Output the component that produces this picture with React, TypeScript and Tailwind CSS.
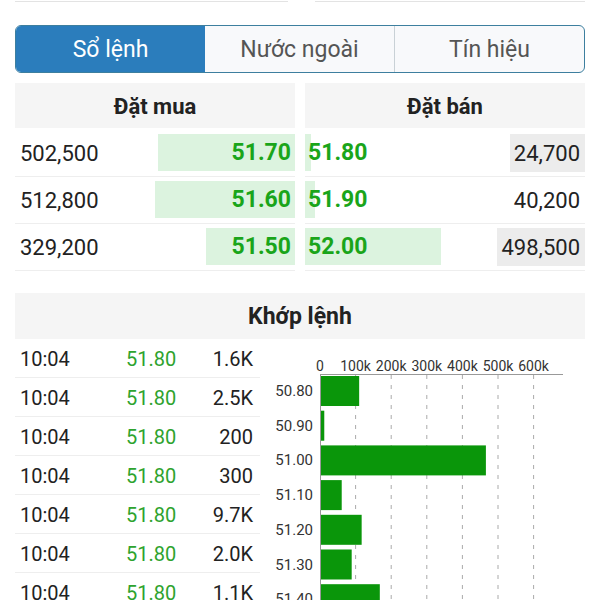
import React from 'react';

const buyRows = [
  { qty: '502,500', price: '51.70', bar: 137 },
  { qty: '512,800', price: '51.60', bar: 140 },
  { qty: '329,200', price: '51.50', bar: 89 },
];

const sellRows = [
  { price: '51.80', qty: '24,700', bar: 6, boxed: true },
  { price: '51.90', qty: '40,200', bar: 10, boxed: false },
  { price: '52.00', qty: '498,500', bar: 136, boxed: true },
];

const trades = [
  { time: '10:04', price: '51.80', vol: '1.6K' },
  { time: '10:04', price: '51.80', vol: '2.5K' },
  { time: '10:04', price: '51.80', vol: '200' },
  { time: '10:04', price: '51.80', vol: '300' },
  { time: '10:04', price: '51.80', vol: '9.7K' },
  { time: '10:04', price: '51.80', vol: '2.0K' },
  { time: '10:04', price: '51.80', vol: '1.1K' },
];

const volumeBars = [
  { label: '50.80', value: 110 },
  { label: '50.90', value: 12 },
  { label: '51.00', value: 466 },
  { label: '51.10', value: 61 },
  { label: '51.20', value: 117 },
  { label: '51.30', value: 89 },
  { label: '51.40', value: 168 },
];

const ticks = ['0', '100k', '200k', '300k', '400k', '500k', '600k'];

function VolumeChart() {
  const x0 = 60;
  const step = 35.6;
  return (
    <svg width="325" height="270" className="block">
      {ticks.map((t, i) => (
        <text
          key={t}
          x={x0 + i * step}
          y={32}
          textAnchor="middle"
          fontSize="14"
          fill="#333"
          fontFamily="Roboto, sans-serif"
        >
          {t}
        </text>
      ))}
      <line x1={x0} y1={35.5} x2={303} y2={35.5} stroke="#999" strokeWidth="1" />
      {ticks.slice(1).map((t, i) => (
        <line
          key={t}
          x1={x0 + (i + 1) * step}
          y1={36}
          x2={x0 + (i + 1) * step}
          y2={270}
          stroke="#aaa"
          strokeWidth="1"
          strokeDasharray="4 6"
        />
      ))}
      {volumeBars.map((b, i) => {
        const top = 37 + i * 34.7;
        return (
          <g key={b.label}>
            <rect x={x0} y={top} width={(b.value / 100) * step} height={30} fill="#0a960a" />
            <text
              x={53}
              y={top + 20}
              textAnchor="end"
              fontSize="15"
              fill="#333"
              fontFamily="Roboto, sans-serif"
            >
              {b.label}
            </text>
          </g>
        );
      })}
      <line x1={x0 + 0.5} y1={35} x2={x0 + 0.5} y2={270} stroke="#999" strokeWidth="1" />
    </svg>
  );
}

export default function App() {
  return (
    <div className="w-[600px] h-[600px] overflow-hidden bg-white font-['Roboto',sans-serif] text-[#222]">
      <div className="flex px-[15px]">
        <div className="w-[273px] h-[2px] border-b border-[#e3e3e3]" />
        <div className="ml-[27px] flex-1 h-[2px] border-b border-[#e3e3e3]" />
      </div>

      <div className="mx-[15px] mt-[23px] h-[48px] flex rounded-[6px] border border-[#3d7f9f] overflow-hidden bg-[#f8f9fb]">
        <div className="flex-1 flex items-center justify-center pt-[2px] bg-[#2b7dbc] text-white text-[23px]">Sổ lệnh</div>
        <div className="flex-1 flex items-center justify-center pt-[2px] text-[#555] text-[23px] border-r border-[#c9d1d6]">Nước ngoài</div>
        <div className="flex-1 flex items-center justify-center pt-[2px] text-[#555] text-[23px]">Tín hiệu</div>
      </div>

      <div className="mx-[15px] mt-[10px] flex gap-[10px]">
        <div className="flex-1">
          <div className="h-[45px] pt-[2px] bg-[#f5f5f5] flex items-center justify-center text-[22px] font-bold">Đặt mua</div>
          <div className="mt-[2px]">
            {buyRows.map((r) => (
              <div key={r.qty} className="relative h-[47px] border-b border-[#eeeeee] flex items-center justify-between pl-[5px] pr-[4px]">
                <div className="absolute right-0 top-[4px] h-[37px] bg-[#dcf3df]" style={{ width: r.bar }} />
                <span className="relative text-[22px]">{r.qty}</span>
                <span className="relative text-[23px] font-bold text-[#1aa51a]">{r.price}</span>
              </div>
            ))}
          </div>
        </div>
        <div className="flex-1">
          <div className="h-[45px] pt-[2px] bg-[#f5f5f5] flex items-center justify-center text-[22px] font-bold">Đặt bán</div>
          <div className="mt-[2px]">
            {sellRows.map((r) => (
              <div key={r.qty} className="relative h-[47px] border-b border-[#eeeeee] flex items-center justify-between pl-[3px]">
                <div className="absolute left-0 top-[4px] h-[37px] bg-[#dcf3df]" style={{ width: r.bar }} />
                <span className="relative text-[23px] font-bold text-[#1aa51a]">{r.price}</span>
                <span
                  className={`relative h-[38px] flex items-center pl-[4px] pr-[5px] text-[22px] ${
                    r.boxed ? 'bg-[#ececec]' : ''
                  }`}
                >
                  {r.qty}
                </span>
              </div>
            ))}
          </div>
        </div>
      </div>

      <div className="mx-[15px] mt-[22px] h-[46px] pt-[2px] bg-[#f5f5f5] flex items-center justify-center text-[23px] font-bold">
        Khớp lệnh
      </div>

      <div className="ml-[15px] mr-[15px] flex">
        <div className="w-[245px]">
          {trades.map((t, i) => (
            <div key={i} className="h-[39px] pt-[2px] border-b border-[#eeeeee] flex items-center text-[20px]">
              <span className="w-[111px] pl-[5px]">{t.time}</span>
              <span className="w-[49px] text-[#2ea32e]">{t.price}</span>
              <span className="flex-1 text-right pr-[7px]">{t.vol}</span>
            </div>
          ))}
        </div>
        <VolumeChart />
      </div>
    </div>
  );
}
